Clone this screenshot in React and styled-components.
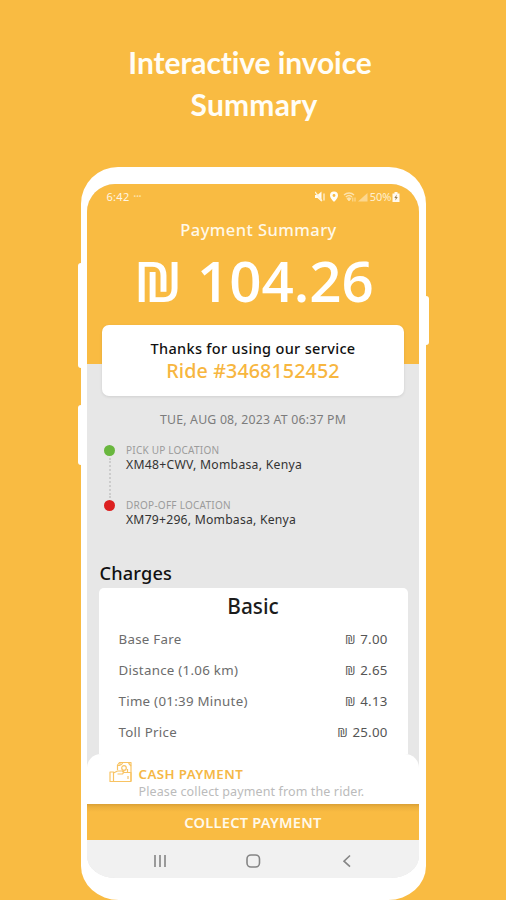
import React from 'react';
import styled, { createGlobalStyle } from 'styled-components';

const charges = [
    { label: 'Base Fare', value: '7.00' },
    { label: 'Distance (1.06 km)', value: '2.65' },
    { label: 'Time (01:39 Minute)', value: '4.13' },
    { label: 'Toll Price', value: '25.00' },
];

const StatusIcons = () => (
    <svg width="55" height="12" viewBox="0 0 55 12" fill="none">
        {/* muted speaker */}
        <path d="M0 4h2.500l4-3.500v10L2.500 7H0z" fill="#fffaf0" />
        <path d="M0 1l7 9M9 2.5v7" stroke="#fff3d6" strokeWidth="1.3" />
        {/* location pin */}
        <path d="M19 .5a4 4 0 0 0-4 4C15 7.200 19 11 19 11s4-3.800 4-6.500A4 4 0 0 0 19 .5z" fill="#fffdf7" />
        <circle cx="19" cy="4.500" r="1.400" fill="#f9bb42" />
        {/* wifi */}
        <path d="M29 4c3-2.700 7.300-2.700 10 0M30.800 6c2-1.700 4.500-1.700 6.200 0" stroke="#fde3ad" strokeWidth="1.4" />
        <path d="M32 7.500c1.300-1 2.800-1 4 0l-2 2.500zM37.800 6.500v4M40 6.500v4" fill="#fde3ad" stroke="#fde3ad" strokeWidth=".9" />
        {/* signal */}
        <path d="M43 10.500h9.500V2z" fill="#fcd78f" />
    </svg>
);

const BatteryIcon = () => (
    <svg width="8" height="10" viewBox="0 0 8 10">
        <path d="M2.5 0h3v1.500H7.500V10H.5V1.500h2z" fill="#fffaf0" />
        <path d="M4.800 2.500L2.300 6h1.500l-.5 2.500L5.800 5H4.300z" fill="#9c8050" />
    </svg>
);

// banknotes above a hand
const CashIcon = () => (
    <svg width="24" height="22" viewBox="0 0 24 22" fill="none" stroke="#f8c363" strokeWidth="1.2" strokeLinejoin="round">
        <path d="M8.500 9V4l2-2.500H22V20" />
        <path d="M11 1.500V4.500H8.500M14 1.500l-2 2.500M22 5l-2.500-3" />
        <circle cx="15" cy="7" r="2.300" />
        <path d="M1 11h3.500v9.500H1zM4.500 12l4-2h5l2 1.500H22v9H4.500" />
        <path d="M8.500 13h5a1.800 1.800 0 0 0 0-3M18.500 8v4M19 15v3" />
    </svg>
);

const App = () => {
    return (
        <Page>
            <GlobalStyle />
            <Heading>
                <HeadLine spacing="-0.1px">Interactive invoice</HeadLine>
                <HeadLine spacing="0.2px" indent={8}>Summary</HeadLine>
            </Heading>

            <Phone>
                <SideKey side="left" top={96} length={105} />
                <SideKey side="left" top={238} length={60} />
                <SideKey side="right" top={129} length={49} />
                <Screen>
                    <Header>
                        <StatusBar>
                            <Text size={11} line={24} color="#fff6e2" spacing="0.3px">6:42</Text>
                            <Dots>•••</Dots>
                            <StatusRight>
                                <StatusIcons />
                                <Text size={11} line={24} color="#fff0d0">50%</Text>
                                <BatteryIcon />
                            </StatusRight>
                        </StatusBar>
                        <Title>Payment Summary</Title>
                        <Amount>₪ 104.26</Amount>
                    </Header>

                    <ThanksCard>
                        <Text size={14.5} line={20} weight={500} color="#111" spacing="0.33px">Thanks for using our service</Text>
                        <Text size={19.7} line={26} weight={500} color="#f7b640" spacing="0.1px">Ride #3468152452</Text>
                    </ThanksCard>

                    <DateLine>TUE, AUG 08, 2023 AT 06:37 PM</DateLine>

                    <Route>
                        <Track>
                            <Dot color="#69b73e" />
                            <Dashes />
                            <Dot color="#dc2020" />
                        </Track>
                        <Stops>
                            <Stop>
                                <Text size={10} line={14} color="#9b9b9b" spacing="0.22px">PICK UP LOCATION</Text>
                                <Text size={12.2} line={16} color="#333" spacing="0.27px">XM48+CWV, Mombasa, Kenya</Text>
                            </Stop>
                            <Stop>
                                <Text size={10} line={14} color="#9b9b9b" spacing="0.25px">DROP-OFF LOCATION</Text>
                                <Text size={12.2} line={16} color="#333" spacing="0.22px">XM79+296, Mombasa, Kenya</Text>
                            </Stop>
                        </Stops>
                    </Route>

                    <SectionTitle>Charges</SectionTitle>
                    <ChargesCard>
                        <Plan>Basic</Plan>
                        {charges.map((item) => (
                            <ChargeRow key={item.label}>
                                <Text size={13.3} line={31} color="#6c6c6c" spacing="0.28px">{item.label}</Text>
                                <Text size={13.3} line={31} color="#555" spacing="0.2px">
                                    <Shekel>₪</Shekel> {item.value}
                                </Text>
                            </ChargeRow>
                        ))}
                    </ChargesCard>

                    <Sheet>
                        <IconBox><CashIcon /></IconBox>
                        <div>
                            <Text size={13.3} line={17} weight={600} color="#f5b745" spacing="0.4px">CASH PAYMENT</Text>
                            <Text size={12.5} line={17} color="#bbb" spacing="0.12px">Please collect payment from the rider.</Text>
                        </div>
                    </Sheet>
                    <CollectButton>COLLECT PAYMENT</CollectButton>

                    <NavBar>
                        <svg width="14" height="14" viewBox="0 0 14 14" stroke="#858585" strokeWidth="1.6">
                            <path d="M2 1v12M7 1v12M12 1v12" />
                        </svg>
                        <svg width="16" height="14" viewBox="0 0 16 14" fill="none" stroke="#858585" strokeWidth="1.6">
                            <rect x="2" y="1" width="12.5" height="12" rx="4" />
                        </svg>
                        <svg width="14" height="14" viewBox="0 0 14 14" fill="none" stroke="#858585" strokeWidth="1.6">
                            <path d="M10 1.5L4 7.200l6 5.500" />
                        </svg>
                    </NavBar>
                </Screen>
            </Phone>
        </Page>
    )
}

const GlobalStyle = createGlobalStyle`
    * {
        box-sizing: border-box;
    }

    body {
        margin: 0;
        background-color: #f9bb42;
        font-family: "Noto Sans", "Open Sans", sans-serif;
    }
`;

const Text = styled.div.withConfig({
    shouldForwardProp: (prop) => !['size', 'line', 'weight', 'color', 'spacing'].includes(prop),
})`
    font-size: ${(props) => props.size}px;
    line-height: ${(props) => props.line}px;
    font-weight: ${(props) => props.weight || 400};
    color: ${(props) => props.color};
    letter-spacing: ${(props) => props.spacing || 'normal'};
    white-space: nowrap;
`;

const Shekel = styled.span`
    margin-right: 1px;
    font-family: "Open Sans", "Noto Sans", sans-serif;
    line-height: 1;
`;

const Page = styled.div`
    display: flex;
    flex-direction: column;
    align-items: center;
    width: 506px;
    height: 900px;
    overflow: hidden;
    background-color: #f9bb42;
`;

const Heading = styled.h1`
    width: 100%;
    height: 167px;
    margin: 0;
    padding: 41px 6px 0 0;
    text-align: center;
    color: #fffdf6;
    font-family: Lato, "Open Sans", sans-serif;
    font-size: 30px;
    font-weight: 700;
    line-height: 42px;
`;

const HeadLine = styled.div.withConfig({
    shouldForwardProp: (prop) => prop !== 'spacing' && prop !== 'indent',
})`
    padding-left: ${(props) => props.indent || 0}px;
    letter-spacing: ${(props) => props.spacing};
`;

const Phone = styled.div`
    position: relative;
    flex: none;
    width: 345px;
    height: 733px;
    padding: 17px 7px 22px 6px;
    border-radius: 37px 37px 38px 38px / 37px 37px 34px 34px;
    background-color: #fff;
`;

// volume and power keys sticking out of the frame
const SideKey = styled.span`
    position: absolute;
    top: ${(props) => props.top}px;
    ${(props) => props.side}: -3px;
    width: 6px;
    height: ${(props) => props.length}px;
    border-radius: 3px;
    background-color: #fff;
`;

const Screen = styled.div`
    display: flex;
    flex-direction: column;
    width: 332px;
    height: 694px;
    border-radius: 28px 28px 28px 28px / 28px 28px 22px 22px;
    overflow: hidden;
    background-color: #e7e7e7;
`;

const Header = styled.div`
    flex: none;
    height: 180px;
    background-color: #f9bb42;
    text-align: center;
`;

const StatusBar = styled.div`
    display: flex;
    align-items: center;
    height: 25px;
    padding: 0 19px 0 20px;
`;

const Dots = styled.span`
    margin-left: 4px;
    font-size: 7px;
    color: #fde0a4;
`;

const StatusRight = styled.div`
    display: flex;
    align-items: center;
    margin-left: auto;
`;

const Title = styled.div`
    margin-top: 9px;
    padding-left: 12px;
    font-size: 16.5px;
    font-weight: 500;
    line-height: 24px;
    letter-spacing: 0.42px;
    color: #fff8e8;
`;

const Amount = styled.div`
    margin-top: 9px;
    padding-left: 3px;
    font-family: "Open Sans", "Noto Sans", sans-serif;
    font-size: 56.5px;
    font-weight: 600;
    line-height: 60px;
    color: #fff;
    white-space: nowrap;
`;

const ThanksCard = styled.div`
    flex: none;
    display: flex;
    flex-direction: column;
    align-items: center;
    height: 71px;
    margin: -39px 15px 0;
    padding: 13px 0 0 1px;
    border-radius: 7px;
    background-color: #fff;
    box-shadow: 0 1px 3px rgba(0, 0, 0, 0.1);
`;

const DateLine = styled.div`
    margin-top: 15px;
    padding-left: 1px;
    font-size: 12.3px;
    line-height: 17px;
    letter-spacing: 0.2px;
    text-align: center;
    color: #7c7c7c;
`;

const Route = styled.div`
    display: flex;
    height: 85px;
    margin-top: 15px;
    padding-left: 17px;
`;

const Track = styled.div`
    display: flex;
    flex-direction: column;
    align-items: center;
    width: 12px;
    height: 66px;
    margin-top: 2px;
`;

const Dot = styled.span.withConfig({ shouldForwardProp: (prop) => prop !== 'color' })`
    width: 11px;
    height: 11px;
    border-radius: 50%;
    background-color: ${(props) => props.color};
`;

const Dashes = styled.span`
    flex: 1;
    margin: 2px 0;
    border-left: 2px dotted #ccc;
`;

const Stops = styled.div`
    display: flex;
    flex-direction: column;
    gap: 25px;
    margin-left: 10.5px;
`;

const Stop = styled.div`
    height: 30px;
`;

const SectionTitle = styled.div`
    margin-top: 33px;
    padding-left: 13px;
    font-size: 18.2px;
    font-weight: 500;
    line-height: 24px;
    letter-spacing: 0.15px;
    color: #111;
`;

const ChargesCard = styled.div`
    flex: none;
    height: 166px;
    margin: 3px 11px 0 12px;
    padding: 4px 20px 0;
    border-radius: 5px 5px 0 0;
    background-color: #fff;
`;

const Plan = styled.div`
    margin-bottom: 3.5px;
    font-size: 20.8px;
    font-weight: 500;
    line-height: 28px;
    text-align: center;
    color: #1c1c1c;
`;

const ChargeRow = styled.div`
    display: flex;
    justify-content: space-between;
    height: 31.2px;
`;

const Sheet = styled.div`
    flex: none;
    display: flex;
    height: 50px;
    padding: 12px 0 0 22px;
    border-radius: 14px 14px 0 0;
    background-color: #fff;
`;

const IconBox = styled.div`
    width: 30px;
    margin-top: -5px;
`;

const CollectButton = styled.button`
    flex: none;
    height: 36px;
    padding: 0 0 0 1px;
    border: none;
    background: linear-gradient(#daa035 0, #ecb03d 3px, #f9bb42 8px);
    font-family: inherit;
    font-size: 14.6px;
    font-weight: 600;
    letter-spacing: 0.25px;
    color: #fff9ea;
`;

const NavBar = styled.div`
    flex: none;
    display: flex;
    align-items: center;
    justify-content: space-between;
    height: 38px;
    padding: 3px 65px 0 66px;
    background-color: #f1f1f1;
`;

export default App;
